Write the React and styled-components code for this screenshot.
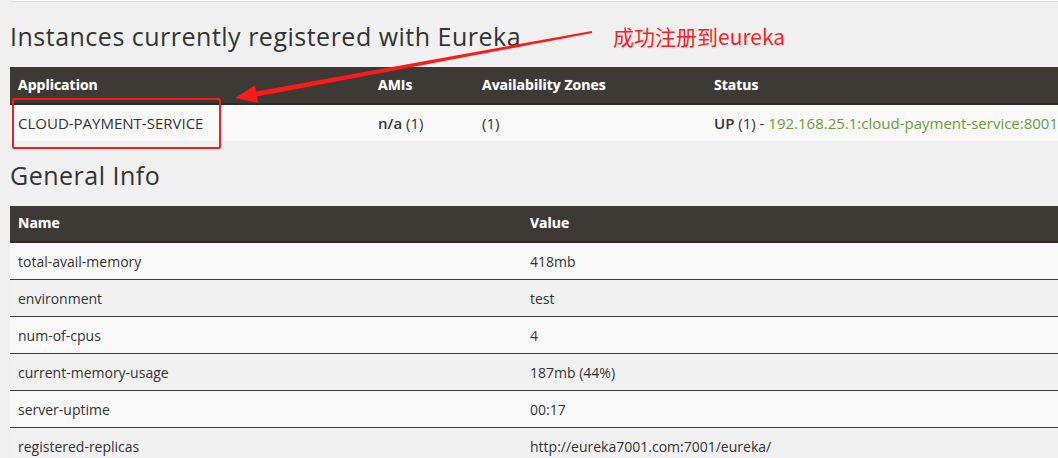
import React from "react";
import styled, { createGlobalStyle } from "styled-components";

const GlobalStyle = createGlobalStyle`
  html, body {
    margin: 0;
    padding: 0;
    background: #f0f0f0;
    overflow: hidden;
  }
  body {
    font-family: "Open Sans", "Liberation Sans", sans-serif;
    font-size: 14px;
    color: #333;
  }
`;

const Page = styled.div`
  position: relative;
  width: 1058px;
  height: 458px;
  padding: 0 0 0 10px;
  box-sizing: border-box;
`;

const TopPanel = styled.div`
  height: 1px;
  background: #fafafa;
  border-bottom: 1px solid #dcdcdc;
`;

const Heading = styled.h2`
  margin: 21px 0 18px;
  font-family: "Open Sans", "Liberation Sans", sans-serif;
  font-weight: 400;
  font-size: 25px;
  letter-spacing: 0.5px;
  line-height: 26px;
  color: #333;
`;

const Table = styled.table`
  width: 1048px;
  border-collapse: collapse;
  table-layout: fixed;
`;

const HeadCell = styled.th`
  height: ${(p) => p.$h || 34}px;
  padding: 0 8px 2px;
  background: #3d3934;
  border-bottom: 2px solid #2f2b27;
  color: #fff;
  font-weight: 700;
  font-size: 14px;
  text-align: left;
  text-shadow: 0 0 1px rgba(255, 255, 255, 0.4);
`;

const Row = styled.tr`
  background: ${(p) => (p.$odd ? "#f9f9f9" : "#f1f1f1")};
  border-top: ${(p) => (p.$first ? "none" : "1px solid #3a3a3a")};
`;

const Cell = styled.td`
  height: 36px;
  padding: 0 8px;
  font-size: ${(p) => p.$size || 14}px;
  color: #333;
  white-space: nowrap;
  overflow: hidden;
`;

const Bold = styled.b`
  font-weight: 600;
`;

const Link = styled.a`
  color: #6a9e37;
  text-decoration: none;
`;

const Callout = styled.div`
  position: absolute;
  left: 613px;
  top: 21px;
  font-family: "Noto Sans CJK SC", "Open Sans", sans-serif;
  font-size: 21px;
  line-height: 30px;
  color: #ff1f1f;
`;

const Highlight = styled.div`
  position: absolute;
  left: 12px;
  top: 98px;
  width: 205px;
  height: 47px;
  border: 2px solid #ff1a1a;
  border-radius: 2px;
`;

const Overlay = styled.svg`
  position: absolute;
  left: 0;
  top: 0;
  pointer-events: none;
`;

const info = [
  ["total-avail-memory", "418mb"],
  ["environment", "test"],
  ["num-of-cpus", "4"],
  ["current-memory-usage", "187mb (44%)"],
  ["server-uptime", "00:17"],
  ["registered-replicas", "http://eureka7001.com:7001/eureka/"],
];

export default function App() {
  return (
    <>
      <GlobalStyle />
      <Page>
        <TopPanel />
        <Heading>Instances currently registered with Eureka</Heading>
        <Table>
          <colgroup>
            <col style={{ width: 360 }} />
            <col style={{ width: 104 }} />
            <col style={{ width: 232 }} />
            <col />
          </colgroup>
          <thead>
            <tr>
              <HeadCell>Application</HeadCell>
              <HeadCell>AMIs</HeadCell>
              <HeadCell>Availability Zones</HeadCell>
              <HeadCell>Status</HeadCell>
            </tr>
          </thead>
          <tbody>
            <Row $odd $first>
              <Cell $size={15}>CLOUD-PAYMENT-SERVICE</Cell>
              <Cell $size={15}>
                <Bold>n/a</Bold> (1)
              </Cell>
              <Cell $size={15}>(1)</Cell>
              <Cell $size={15}>
                <Bold>UP</Bold> (1) -{" "}
                <Link href="#">192.168.25.1:cloud-payment-service:8001</Link>
              </Cell>
            </Row>
          </tbody>
        </Table>

        <Heading>General Info</Heading>
        <Table>
          <colgroup>
            <col style={{ width: 512 }} />
            <col />
          </colgroup>
          <thead>
            <tr>
              <HeadCell $h={33}>Name</HeadCell>
              <HeadCell $h={33}>Value</HeadCell>
            </tr>
          </thead>
          <tbody>
            {info.map(([name, value], i) => (
              <Row key={name} $odd={i % 2 === 0} $first={i === 0}>
                <Cell>{name}</Cell>
                <Cell>{value}</Cell>
              </Row>
            ))}
          </tbody>
        </Table>

        <Highlight />
        <Callout>成功注册到eureka</Callout>
        <Overlay width="1058" height="458" viewBox="0 0 1058 458">
          <polygon
            fill="#ff1a1a"
            points="235,98 258.2,102.9 257.1,96.5 592.2,33 591.8,31 256.1,91.5 255,85.2"
          />
        </Overlay>
      </Page>
    </>
  );
}
